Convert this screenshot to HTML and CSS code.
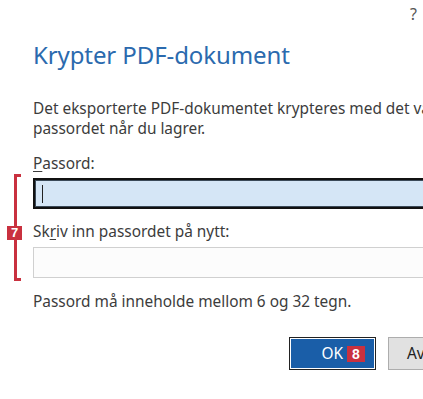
FILE: index.html
```html
<!DOCTYPE html>
<html lang="no">
<head>
<meta charset="utf-8">
<title>Krypter PDF-dokument</title>
<link rel="stylesheet" href="styles.css">
</head>
<body>
<div class="dialog">
  <div class="titlebar"><span class="help">?</span></div>
  <div class="content">
    <h1 class="title">Krypter PDF-dokument</h1>
    <p class="desc">Det eksporterte PDF-dokumentet krypteres med det valgte<br>passordet når du lagrer.</p>
    <div class="fields">
      <label class="label"><u>P</u>assord:</label>
      <div class="input input-active"><span class="caret"></span></div>
      <label class="label label-2">Sk<u>r</u>iv inn passordet på nytt:</label>
      <div class="input"></div>
      <div class="bracket"><span class="badge badge-7">7</span></div>
    </div>
    <p class="hint">Passord må inneholde mellom 6 og 32 tegn.</p>
    <div class="buttons">
      <button class="btn btn-primary">OK <span class="badge badge-8">8</span></button>
      <button class="btn btn-secondary">Avbryt</button>
    </div>
  </div>
</div>
</body>
</html>
```

FILE: styles.css
```css
html, body {
  margin: 0;
  padding: 0;
  background: #ffffff;
}
body {
  width: 423px;
  height: 399px;
  overflow: hidden;
  font-family: "Noto Sans", "Open Sans", sans-serif;
  color: #3c3c3c;
}
.dialog {
  width: 423px;
  height: 399px;
  overflow: hidden;
}
.titlebar {
  height: 40px;
  display: flex;
  justify-content: flex-end;
  align-items: flex-start;
  padding-right: 6px;
  box-sizing: border-box;
}
.help {
  font-size: 16px;
  line-height: 20px;
  margin-top: 4px;
  color: #555;
}
.content {
  padding-left: 33px;
  width: 560px;
}
.title {
  margin: 0;
  font-weight: normal;
  font-size: 24px;
  line-height: 30px;
  color: #2b6aae;
  letter-spacing: -0.1px;
}
.desc {
  margin: 29px 0 0;
  font-size: 15.4px;
  line-height: 20px;
  white-space: nowrap;
}
.fields {
  position: relative;
  margin-top: 15px;
}
.label {
  display: block;
  font-size: 15.4px;
  line-height: 20px;
}
.label u {
  text-decoration-thickness: 1px;
  text-underline-offset: 2px;
}
.input {
  width: 440px;
  height: 31px;
  box-sizing: border-box;
  border: 1px solid #d0d0d0;
  background: #fcfcfc;
  margin-top: 5px;
}
.input-active {
  margin-top: 4px;
  border: 2px solid #111;
  background: #d5e6f6;
  box-shadow: inset 0 0 0 1px #3b4a58;
  position: relative;
}
.caret {
  position: absolute;
  left: 7px;
  top: 5px;
  width: 1px;
  height: 18px;
  background: #222;
}
.label-2 {
  margin-top: 13px;
}
.bracket {
  position: absolute;
  left: -19px;
  top: 20px;
  width: 7px;
  height: 107px;
  border: 3px solid #c9313f;
  border-right: none;
  box-sizing: border-box;
}
.badge {
  display: inline-block;
  background: #c9313f;
  color: #fff;
  font-family: "Liberation Sans", Arial, sans-serif;
  font-weight: bold;
  text-align: center;
}
.badge-7 {
  position: absolute;
  left: -10px;
  top: 49px;
  width: 15px;
  height: 14px;
  font-size: 13px;
  line-height: 14px;
}
.hint {
  margin: 14px 0 0;
  font-size: 15.4px;
  line-height: 20px;
}
.buttons {
  display: flex;
  gap: 12px;
  margin-top: 25px;
  padding-left: 256px;
}
.btn {
  height: 33px;
  font-family: "Noto Sans", "Open Sans", sans-serif;
  font-size: 15.4px;
  box-sizing: border-box;
  padding: 0;
  margin: 0;
}
.btn-primary {
  width: 87px;
  background: #1a5ea8;
  color: #fff;
  border: 1px solid #222;
  box-shadow: inset 0 0 0 1px #fff;
  display: flex;
  align-items: center;
  justify-content: flex-end;
  padding-right: 10px;
  gap: 4px;
}
.badge-8 {
  width: 18px;
  height: 16px;
  font-size: 14px;
  line-height: 16px;
}
.btn-secondary {
  width: 87px;
  background: #e1e1e1;
  color: #222;
  border: 1px solid #adadad;
  text-align: left;
  padding-left: 18px;
}
```
